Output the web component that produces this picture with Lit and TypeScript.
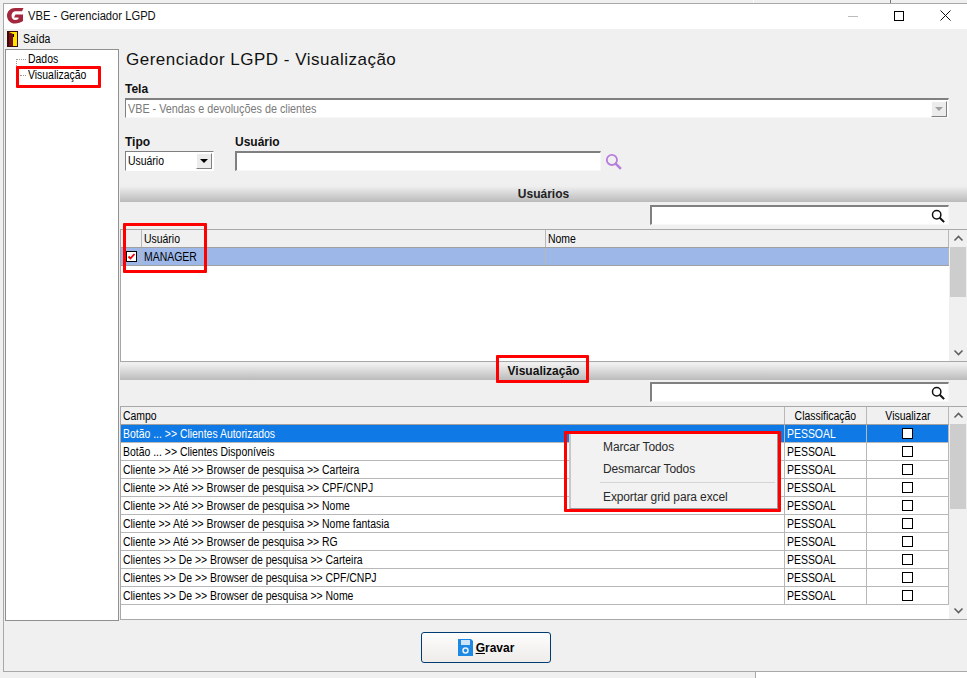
import { LitElement, html, css } from "lit";
import { customElement } from "lit/decorators.js";

const CAMPOS = [
  "Botão ... >> Clientes Autorizados",
  "Botão ... >> Clientes Disponíveis",
  "Cliente >> Até >> Browser de pesquisa >> Carteira",
  "Cliente >> Até >> Browser de pesquisa >> CPF/CNPJ",
  "Cliente >> Até >> Browser de pesquisa >> Nome",
  "Cliente >> Até >> Browser de pesquisa >> Nome fantasia",
  "Cliente >> Até >> Browser de pesquisa >> RG",
  "Clientes >> De >> Browser de pesquisa >> Carteira",
  "Clientes >> De >> Browser de pesquisa >> CPF/CNPJ",
  "Clientes >> De >> Browser de pesquisa >> Nome",
];

const lens = (color: string, size: number) => html`<svg width=${size} height=${size} viewBox="0 0 16 16" fill="none" stroke=${color}>
  <circle cx="6.5" cy="6.5" r="4.8" stroke-width="1.7"></circle>
  <path d="M10 10l5 5" stroke-width="2.4"></path>
</svg>`;

@customElement("app-root")
export class AppRoot extends LitElement {
  static styles = css`
    :host {
      display: block;
      width: 967px;
      height: 678px;
      overflow: hidden;
      background: #f0f0f0;
      font-family: "Liberation Sans", Arial, sans-serif;
      font-size: 12px;
      color: #000;
      position: relative;
    }
    * { box-sizing: border-box; }
    .n { display: inline-block; transform: scaleX(0.87); transform-origin: left center; white-space: nowrap; }
    .topstrip { height: 3px; display: flex; }
    .topstrip .seg { width: 138px; margin-left: 753px; border-left: 1px solid #fff; border-right: 1px solid #777; }
    .win { border: 1px solid #a8a8a8; border-right: 0; margin-left: 3px; height: 669px; }
    .titlebar { height: 25px; background: #fff; display: flex; align-items: center; padding: 0 0 2px 3px; gap: 4px; }
    .titlebar .t { flex: 1; color: #111; }
    .titlebar .t .n { transform: scaleX(0.934); }
    .winbtns { display: flex; align-items: center; }
    .winbtn { width: 44px; height: 23px; display: flex; align-items: center; justify-content: center; }
    .winbtn.mx { width: 48px; }
    .menubar { height: 20px; display: flex; align-items: center; padding-left: 3px; gap: 5px; }
    .main { display: flex; height: 622px; padding-left: 1px; }
    .tree { width: 114px; height: 572px; background: #fff; border: 1px solid #909090; padding: 1px 0 0 10px; flex: none; }
    .node { height: 16px; display: flex; gap: 2px; line-height: 16px; }
    .node i { display: block; border-top: 1px dotted #999; margin-top: 8px; }
    .node i.v1 { width: 10px; height: 11px; border-left: 1px dotted #999; }
    .node i.v2 { width: 6px; height: 1px; margin-left: 4px; }
    .right { flex: 1; margin-left: 1px; min-width: 0; display: flex; flex-direction: column; }
    .h1 { font-size: 17px; letter-spacing: 0.5px; height: 22px; margin: 0 0 0 6px; line-height: 21px; white-space: nowrap; color: #111; }
    .lab { font-weight: bold; font-size: 12px; height: 15px; line-height: 15px; color: #111; }
    .telaw { padding: 11px 18px 0 5px; }
    .combo { height: 20px; margin-top: 1px; background: #fff; border-style: solid; border-color: #808080 #f8f8f8 #f8f8f8 #808080; border-width: 2px 1px 1px 1px; display: flex; align-items: center; color: #7a7a7a; padding-left: 2px; justify-content: space-between; }
    .combo .n { transform: scaleX(0.9); }
    .arr { width: 16px; height: 16px; background: #ececec; border: 1px solid; border-color: #fff #808080 #808080 #fff; display: flex; align-items: center; justify-content: center; }
    .combo .arr { margin-right: 1px; }
    .tri { width: 0; height: 0; border: 4px solid transparent; border-bottom: 0; border-top: 4px solid #a0a0a0; }
    .tri.dark { border-top-color: #000; }
    .row2 { display: flex; padding: 17px 0 0 5px; gap: 21px; height: 66px; }
    .sel { width: 89px; height: 20px; margin-top: 1px; background: #fff; border: 1px solid; border-color: #808080 #fff #fff #808080; display: flex; align-items: center; justify-content: space-between; padding-left: 2px; }
    .sel .arr { margin-right: 1px; }
    .line { display: flex; align-items: flex-start; gap: 4px; margin-top: 1px; }
    .inp { width: 366px; height: 20px; background: #fff; border-style: solid; border-width: 2px 1px 1px 2px; border-color: #808080 #f8f8f8 #f8f8f8 #808080; }
    .lensw { padding-top: 2px; display: block; }
    .section { height: 18px; background: linear-gradient(#efefef, #efefef 12%, #bbb); font-weight: bold; font-size: 12px; color: #222; text-align: center; line-height: 19px; flex: none; }
    .section.s1 { line-height: 20px; }
    .section.s2 { color: #111; }
    .searchrow { height: 27px; display: flex; justify-content: flex-end; padding: 3px 18px 0 0; flex: none; }
    .searchrow.s2 { height: 26px; padding-top: 2px; }
    .search { width: 299px; height: 20px; background: #fff; border-style: solid; border-width: 2px 1px 1px 2px; border-color: #808080 #f8f8f8 #f8f8f8 #808080; display: flex; justify-content: flex-end; align-items: center; padding-right: 3px; }
    .grid { background: #fff; border: 1px solid #a8a8a8; border-right: 0; display: flex; flex: none; }
    .g1 { height: 133px; }
    .g2 { height: 214px; }
    .gbody { flex: 1; min-width: 0; }
    .sb { width: 18px; flex: none; display: flex; flex-direction: column; }
    .sbbtn { height: 17px; flex: none; display: flex; align-items: center; justify-content: center; background: #f0f0f0; }
    .sbtrack { flex: 1; background: #f0f0f0; padding: 0 1px; }
    .thumb { background: #cdcdcd; }
    .tr { display: flex; height: 18px; border-bottom: 1px solid #b8b8b8; line-height: 18px; }
    .tr.head { background: #f0f0f0; border-bottom-color: #a0a0a0; }
    .td { border-right: 1px solid #b8b8b8; padding-left: 2px; white-space: nowrap; overflow: hidden; flex: none; height: 17px; }
    .tr.sel1 { background: #9db8e8; border-bottom-color: #a0a0a0; }
    .tr.sel2 { background: #0f7ae5; color: #fff; }
    .chk { width: 21px; display: flex; align-items: center; justify-content: center; padding: 0; }
    .cu { width: 404px; }
    .cn { flex: 1; padding-left: 2px; }
    .cc { flex: 1; padding-left: 2px; }
    .cb { width: 82px; }
    .cv { width: 82px; display: flex; align-items: center; justify-content: center; padding: 0; }
    .hcenter { text-align: center; padding-left: 0; }
    .hcenter .n, .cv .n { transform-origin: center; }
    .box { width: 11px; height: 11px; background: #fff; border: 1px solid #000; display: block; }
    .bottom { display: flex; align-items: flex-start; padding: 12px 0 0 301px; }
    .btn { font-size: 12px; width: 130px; height: 31px; border: 1px solid #003c74; border-radius: 3px; background: linear-gradient(#fdfdfd, #efece9); display: flex; align-items: center; justify-content: center; gap: 3px; font-weight: bold; }
    .foot { display: flex; height: 6px; }
    .foot .a { width: 755px; }
    .foot .b { flex: 1; background: #fff; border-left: 1px solid #a8a8a8; }
    .menu { position: absolute; left: 569px; top: 433px; width: 209px; height: 76px; background: #f2f2f2; border: 1px solid #9a9a9a; border-left: 2px solid #c8c8c8; color: #2a2a2a; letter-spacing: -0.12px; }
    .mi { position: absolute; left: 32px; white-space: nowrap; line-height: 16px; }
    .i1 { top: 5px; }
    .i2 { top: 27px; }
    .i3 { top: 55px; }
    .msep { position: absolute; left: 29px; right: 2px; top: 48px; border-top: 1px solid #d4d4d4; }
    .mark { position: absolute; border: 3px solid #f00; pointer-events: none; border-radius: 1px; }
    .m1 { left: 16px; top: 66px; width: 85px; height: 22px; }
    .m2 { left: 123px; top: 223px; width: 84px; height: 50px; }
    .m3 { left: 496px; top: 355px; width: 93px; height: 28px; }
    .m4 { left: 564px; top: 431px; width: 217px; height: 81px; }
  `;

  render() {
    return html`
      <div class="topstrip"><div class="seg"></div></div>
      <div class="win">
        <div class="titlebar">
          <svg width="17" height="17" viewBox="0 0 17 17"><path d="M16.500 1H8C3.500 1 0 4.300 0 8.700S3.500 16.500 8 16.500c3 0 6-1 8-2.500V7.500H8.500l-1.500 3h4.500v1.500c-1 .7-2.200 1-3.200 1-2.300 0-3.800-1.800-3.800-4.300S6.300 4.300 8.600 4.300H15z" fill="#a3273d"></path></svg>
          <span class="t"><span class="n">VBE - Gerenciador LGPD</span></span>
          <div class="winbtns">
            <div class="winbtn"><svg width="10" height="10"><path d="M0 5.500h10" stroke="#bbb"></path></svg></div>
            <div class="winbtn mx"><svg width="10" height="10"><rect x=".5" y=".5" width="9" height="9" fill="none" stroke="#000"></rect></svg></div>
            <div class="winbtn"><svg width="11" height="11"><path d="M.5 .5l10 10M10.500 .5l-10 10" stroke="#111"></path></svg></div>
          </div>
        </div>
        <div class="menubar">
          <svg width="11" height="16" viewBox="0 0 11 16"><rect width="11" height="16" fill="#3a0a0a"></rect><rect x="2" y="1" width="8" height="14" fill="#ffe600"></rect><path d="M2 1l4 2v12H2z" fill="#7a1010"></path><rect x="6" y="3" width="1" height="3" fill="#000"></rect></svg>
          <span class="n">Saída</span>
        </div>
        <div class="main">
          <div class="tree">
            <div class="node"><i class="v1"></i><span class="n">Dados</span></div>
            <div class="node"><i class="v2"></i><span class="n">Visualização</span></div>
          </div>
          <div class="right">
            <div class="h1">Gerenciador LGPD - Visualização</div>
            <div class="telaw">
              <div class="lab">Tela</div>
              <div class="combo"><span class="n">VBE - Vendas e devoluções de clientes</span><span class="arr"><span class="tri"></span></span></div>
            </div>
            <div class="row2">
              <div>
                <div class="lab">Tipo</div>
                <div class="sel"><span class="n">Usuário</span><span class="arr"><span class="tri dark"></span></span></div>
              </div>
              <div>
                <div class="lab">Usuário</div>
                <div class="line"><div class="inp"></div><span class="lensw">${lens("#b57edc", 17)}</span></div>
              </div>
            </div>
            <div class="section s1">Usuários</div>
            <div class="searchrow"><div class="search">${lens("#111", 14)}</div></div>
            <div class="grid g1">
              <div class="gbody">
                <div class="tr head"><div class="td chk"></div><div class="td cu"><span class="n">Usuário</span></div><div class="td cn"><span class="n">Nome</span></div></div>
                <div class="tr sel1"><div class="td chk"><svg class="box" viewBox="0 0 9 9"><path d="M1.500 4.500l2 2 4-4.500" fill="none" stroke="#f00000" stroke-width="1.800"></path></svg></div><div class="td cu"><span class="n">MANAGER</span></div><div class="td cn"></div></div>
              </div>
              ${this.scrollbar(50)}
            </div>
            <div class="section s2">Visualização</div>
            <div class="searchrow s2"><div class="search">${lens("#111", 14)}</div></div>
            <div class="grid g2">
              <div class="gbody">
                <div class="tr head"><div class="td cc"><span class="n">Campo</span></div><div class="td cb hcenter"><span class="n">Classificação</span></div><div class="td cv"><span class="n">Visualizar</span></div></div>
                ${CAMPOS.map((c, i) => html`<div class="tr ${i === 0 ? "sel2" : ""}"><div class="td cc"><span class="n">${c}</span></div><div class="td cb"><span class="n">PESSOAL</span></div><div class="td cv"><span class="box"></span></div></div>`)}
              </div>
              ${this.scrollbar(85)}
            </div>
            <div class="bottom">
              <div class="btn">
                <svg width="15" height="17" viewBox="0 0 15 17"><path d="M0 0h13l2 2v15H0z" fill="#1e88e5"></path><rect x="3" y="1" width="9" height="5" fill="#cfe4f7"></rect><circle cx="7.500" cy="11.500" r="2.500" fill="none" stroke="#e8f2fb" stroke-width="1.500"></circle></svg>
                <span><u>G</u>ravar</span>
              </div>
            </div>
          </div>
        </div>
      </div>
      <div class="foot"><div class="a"></div><div class="b"></div></div>
      <div class="menu">
        <div class="mi i1">Marcar Todos</div>
        <div class="mi i2">Desmarcar Todos</div>
        <div class="msep"></div>
        <div class="mi i3">Exportar grid para excel</div>
      </div>
      <div class="mark m1"></div>
      <div class="mark m2"></div>
      <div class="mark m3"></div>
      <div class="mark m4"></div>
    `;
  }

  scrollbar(thumb: number) {
    return html`<div class="sb">
      <div class="sbbtn"><svg width="11" height="7"><path d="M1.500 5.500l4-4 4 4" fill="none" stroke="#606060" stroke-width="1.600"></path></svg></div>
      <div class="sbtrack"><div class="thumb" style="height:${thumb}px"></div></div>
      <div class="sbbtn"><svg width="11" height="7"><path d="M1.500 1.500l4 4 4-4" fill="none" stroke="#606060" stroke-width="1.600"></path></svg></div>
    </div>`;
  }
}
